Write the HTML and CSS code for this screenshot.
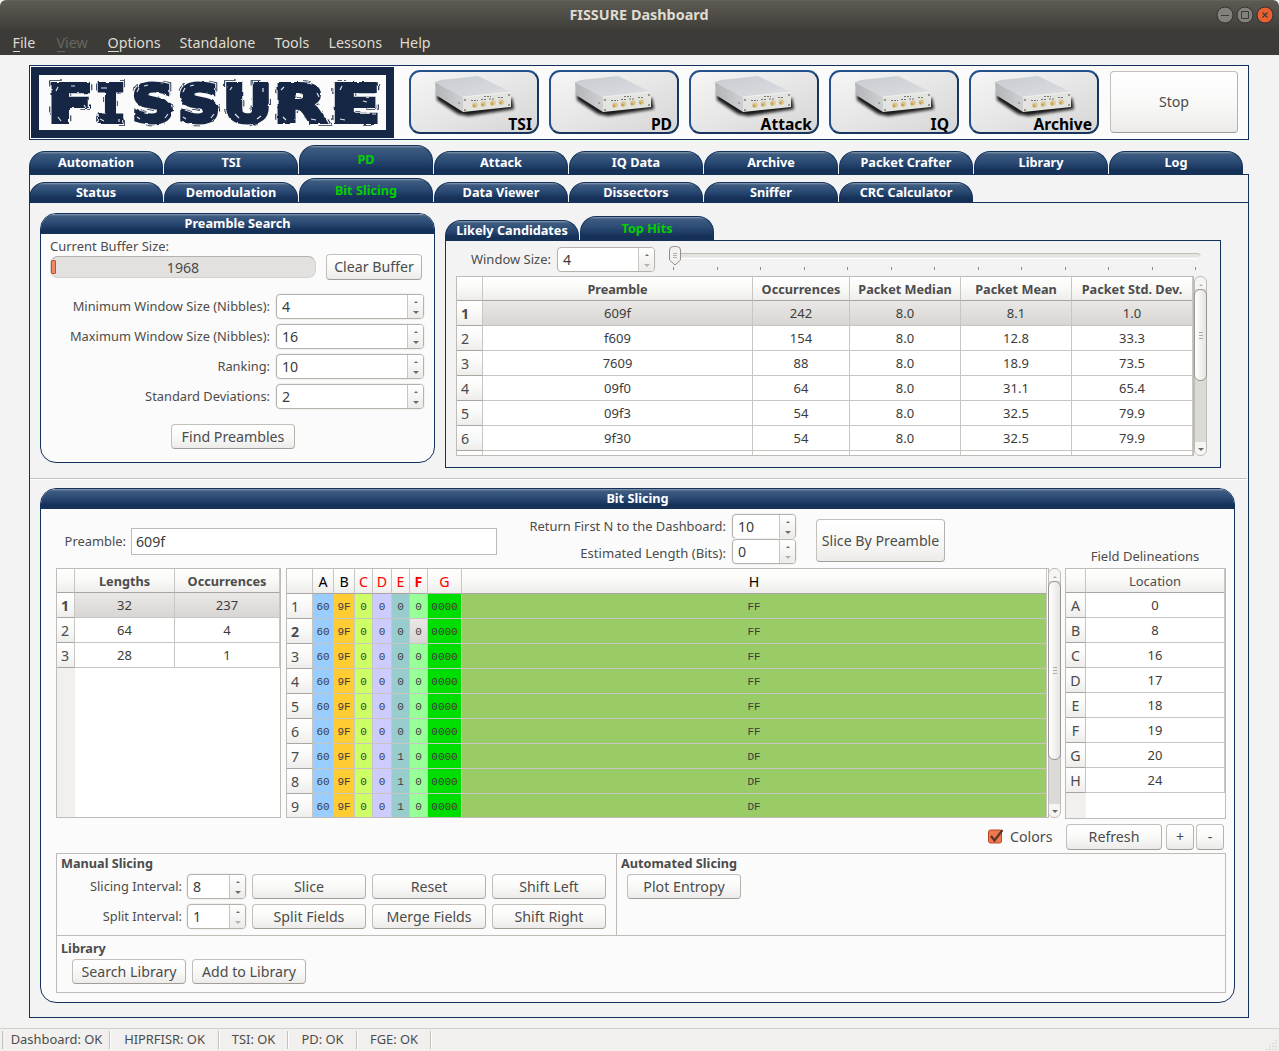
FILE: index.html
```html
<!DOCTYPE html>
<html lang="en">
<head>
<meta charset="utf-8">
<title>FISSURE Dashboard</title>
<link rel="stylesheet" href="styles.css">
</head>
<body>
<svg class="defs" width="0" height="0" aria-hidden="true">
  <defs>
    <linearGradient id="lid" x1="0" y1="0" x2="1" y2="1"><stop offset="0" stop-color="#c9cccf"/><stop offset=".6" stop-color="#d3d6da"/><stop offset="1" stop-color="#dfe0e2"/></linearGradient>
    <linearGradient id="side" x1="0" y1="0" x2="1" y2="0"><stop offset="0" stop-color="#b3b5b8"/><stop offset="1" stop-color="#cfd0d2"/></linearGradient>
    <filter id="soft" x="-20%" y="-30%" width="140%" height="170%"><feGaussianBlur stdDeviation="1.700"/></filter>
    <filter id="rough" x="-5%" y="-10%" width="110%" height="120%"><feTurbulence type="fractalNoise" baseFrequency=".2" numOctaves="1" seed="4" result="n"/><feDisplacementMap in="SourceGraphic" in2="n" scale="3" xChannelSelector="R" yChannelSelector="G"/></filter>
    <symbol id="radio" viewBox="0 0 126 60">
      <path d="M26 18L52 33L101 26L103 37L57 44L47 42L26 28Z" fill="#111" opacity=".95" filter="url(#soft)"/>
      <path d="M24 10L52 25V40L25 23Z" fill="url(#side)"/>
      <path d="M24 10L30 8L67 4L100 20L52 25Z" fill="url(#lid)"/>
      <path d="M52 25L100 20V35L52 40Z" fill="#e3e3df"/>
      <path d="M52 25L100 20" stroke="#eff0f1"/>
      <g fill="#7b6f66"><circle cx="54" cy="28" r=".9"/><circle cx="98" cy="23" r=".9"/><circle cx="54" cy="38" r=".9"/><circle cx="98" cy="33" r=".9"/><circle cx="48" cy="31" r=".8"/></g>
      <path d="M60 28.500h7M70 27.500h6M78 27h6M87 25.500h6M73 24.500h7" stroke="#78746e" stroke-width="1" stroke-dasharray="2 1"/>
      <g fill="#dcc897"><circle cx="64" cy="33" r="2.800"/><circle cx="72.500" cy="32" r="2.800"/><circle cx="82" cy="31" r="2.800"/><circle cx="90.500" cy="30" r="2.800"/></g>
      <g fill="#c9a24c"><circle cx="63" cy="34" r="1.400"/><circle cx="71.500" cy="33" r="1.400"/><circle cx="81" cy="32" r="1.400"/><circle cx="89.500" cy="31" r="1.400"/></g>
    </symbol>
  </defs>
</svg>

<header class="titlebar">
  <span class="title">FISSURE Dashboard</span>
  <div class="winbtns">
    <svg width="18" height="18"><circle cx="9" cy="9" r="8" fill="#83817b" stroke="#33322e"/><path d="M5 9.500h8" stroke="#3c3b37"/></svg>
    <svg width="18" height="18"><circle cx="9" cy="9" r="8" fill="#83817b" stroke="#33322e"/><path d="M5.500 5.500h7v7h-7z" fill="none" stroke="#3c3b37"/></svg>
    <svg width="18" height="18"><circle cx="9" cy="9" r="8" fill="#ea5f31" stroke="#33322e"/><path d="M6.500 6.500l5 5M11.500 6.500l-5 5" stroke="#3c3b37" stroke-width="1.200"/></svg>
  </div>
</header>
<nav class="menubar">
  <span class="m1"><u>F</u>ile</span><span class="m2 off"><u>V</u>iew</span><span class="m3"><u>O</u>ptions</span><span class="m4">Standalone</span><span class="m5">Tools</span><span class="m6">Lessons</span><span class="m7">Help</span>
</nav>

<main>
  <section class="banner">
    <svg class="logo" width="363" height="71" viewBox="0 0 363 71">
      <defs>
        <g id="wordmark">
          <text x="17" y="54.500" textLength="45" lengthAdjust="spacingAndGlyphs">F</text>
          <text class="slab" x="64.500" y="54.500" textLength="30" lengthAdjust="spacingAndGlyphs">I</text>
          <text x="101" y="54.500" textLength="42" lengthAdjust="spacingAndGlyphs">S</text>
          <text x="147" y="54.500" textLength="42" lengthAdjust="spacingAndGlyphs">S</text>
          <text x="192" y="54.500" textLength="49" lengthAdjust="spacingAndGlyphs">U</text>
          <text x="243" y="54.500" textLength="52" lengthAdjust="spacingAndGlyphs">R</text>
          <text x="300" y="54.500" textLength="49" lengthAdjust="spacingAndGlyphs">E</text>
        </g>
      </defs>
      <rect width="363" height="71" fill="#152744"/>
      <rect x="8" y="8" width="347" height="55" fill="#fbfbfb"/>
      <g class="logotext" filter="url(#rough)">
        <use href="#wordmark" class="halo"/>
        <use href="#wordmark" class="gap"/>
        <use href="#wordmark" class="ink"/>
      </g>
      <path class="chips" d="M25 24l2-4M40 19h4M27 50l3 4M53 38l2 3M70 21h6M69 52l4 2M88 52v3M106 25l2-4M113 19l4-1M106 50l3 2M137 47l-3 4M152 25l2-4M159 19l4-1M152 50l3 2M183 47l-3 4M199 23l2-3M204 47l4 4M230 49l-4 3M232 21v4M250 23l3-3M252 50l3 3M286 26l2 4M280 52l5 1M309 23l2-4M309 52l5 1M341 47h4M332 34l4 1"/>
    </svg>
    <div class="devs">
      <button class="dev"><svg width="126" height="60"><use href="#radio"/></svg><b>TSI</b></button>
      <button class="dev"><svg width="126" height="60"><use href="#radio"/></svg><b>PD</b></button>
      <button class="dev"><svg width="126" height="60"><use href="#radio"/></svg><b>Attack</b></button>
      <button class="dev iq"><svg width="126" height="60"><use href="#radio"/></svg><b>IQ</b></button>
      <button class="dev"><svg width="126" height="60"><use href="#radio"/></svg><b>Archive</b></button>
    </div>
    <button class="btn stop">Stop</button>
  </section>

  <nav class="tabs main-tabs">
    <span class="tab">Automation</span><span class="tab">TSI</span><span class="tab on">PD</span><span class="tab">Attack</span><span class="tab">IQ Data</span><span class="tab">Archive</span><span class="tab">Packet Crafter</span><span class="tab">Library</span><span class="tab">Log</span>
  </nav>

  <section class="pane">
    <nav class="tabs sub-tabs">
      <span class="tab">Status</span><span class="tab">Demodulation</span><span class="tab on">Bit Slicing</span><span class="tab">Data Viewer</span><span class="tab">Dissectors</span><span class="tab">Sniffer</span><span class="tab">CRC Calculator</span>
    </nav>

    <div class="upper">
      <section class="group search">
        <h2>Preamble Search</h2>
        <label class="buflabel">Current Buffer Size:</label>
        <div class="bufrow">
          <div class="progress"><i></i><span>1968</span></div>
          <button class="btn clear">Clear Buffer</button>
        </div>
        <div class="fields">
          <label>Minimum Window Size (Nibbles):</label><div class="spin"><span>4</span><i><s class="up"></s><s class="dn"></s></i></div>
          <label>Maximum Window Size (Nibbles):</label><div class="spin"><span>16</span><i><s class="up"></s><s class="dn"></s></i></div>
          <label>Ranking:</label><div class="spin"><span>10</span><i><s class="up"></s><s class="dn"></s></i></div>
          <label>Standard Deviations:</label><div class="spin"><span>2</span><i><s class="up"></s><s class="dn"></s></i></div>
        </div>
        <button class="btn find">Find Preambles</button>
      </section>

      <section class="hits">
        <nav class="tabs hit-tabs"><span class="tab">Likely Candidates</span><span class="tab on">Top Hits</span></nav>
        <div class="hitpane">
          <div class="winrow">
            <label>Window Size:</label>
            <div class="spin"><span>4</span><i><s class="up"></s><s class="dn dim"></s></i></div>
            <svg class="slider" width="534" height="28">
              <rect x="2.500" y="8.500" width="529" height="4" rx="2" fill="#e6e4e1"/>
              <path d="M3 8.500h527q2 0 2 2" fill="none" stroke="#bfbbb5"/>
              <path d="M3 13.500h527" stroke="#fff"/>
              <path d="M5.500 22v3M49.500 22v3M92.500 22v3M136.500 22v3M179.500 22v3M223.500 22v3M266.500 22v3M310.500 22v3M353.500 22v3M397.500 22v3M440.500 22v3M484.500 22v3M527.500 22v3" stroke="#8f8c87"/>
              <path d="M1.500 5q0-3.500 4-3.500h3q4 0 4 3.500v10l-5.500 5-5.500-5z" fill="#f2f1f0" stroke="#928e87"/>
              <path d="M5 8.500h4M5 10.500h4M5 12.500h4" stroke="#b5b1ab"/>
            </svg>
          </div>
          <div class="tablewrap top-table">
            <div class="clip">
            <table>
              <colgroup><col style="width:26px"><col style="width:270px"><col style="width:97px"><col style="width:111px"><col style="width:111px"><col style="width:121px"></colgroup>
              <tr><th></th><th>Preamble</th><th>Occurrences</th><th>Packet Median</th><th>Packet Mean</th><th>Packet Std. Dev.</th></tr>
              <tr class="sel"><th>1</th><td>609f</td><td>242</td><td>8.0</td><td>8.1</td><td>1.0</td></tr>
              <tr><th>2</th><td>f609</td><td>154</td><td>8.0</td><td>12.8</td><td>33.3</td></tr>
              <tr><th>3</th><td>7609</td><td>88</td><td>8.0</td><td>18.9</td><td>73.5</td></tr>
              <tr><th>4</th><td>09f0</td><td>64</td><td>8.0</td><td>31.1</td><td>65.4</td></tr>
              <tr><th>5</th><td>09f3</td><td>54</td><td>8.0</td><td>32.5</td><td>79.9</td></tr>
              <tr><th>6</th><td>9f30</td><td>54</td><td>8.0</td><td>32.5</td><td>79.9</td></tr>
              <tr><th></th><td></td><td></td><td></td><td></td><td></td></tr>
            </table>
            </div>
            <div class="scroll"><s class="up dim"></s><div class="thumb short"><i></i></div><s class="dn"></s></div>
          </div>
        </div>
      </section>
    </div>

    <hr>

    <section class="group slicing">
      <h2>Bit Slicing</h2>
      <div class="query">
        <label class="plabel">Preamble:</label>
        <div class="line">609f</div>
        <div class="opts">
          <label>Return First N to the Dashboard:</label><div class="spin"><span>10</span><i><s class="up"></s><s class="dn"></s></i></div>
          <label>Estimated Length (Bits):</label><div class="spin"><span>0</span><i><s class="up"></s><s class="dn dim"></s></i></div>
        </div>
        <button class="btn slicebtn">Slice By Preamble</button>
        <label class="fdlabel">Field Delineations</label>
      </div>

      <div class="tables">
        <div class="clip lengths">
          <table>
            <colgroup><col style="width:18px"><col style="width:100px"><col style="width:105px"></colgroup>
            <tr><th></th><th>Lengths</th><th>Occurrences</th></tr>
            <tr class="sel"><th>1</th><td>32</td><td>237</td></tr>
            <tr><th>2</th><td>64</td><td>4</td></tr>
            <tr><th>3</th><td>28</td><td>1</td></tr>
          </table>
        </div>
        <div class="tablewrap bits-wrap">
          <div class="clip bits">
          <table>
            <colgroup><col style="width:26px"><col style="width:21px"><col style="width:21px"><col style="width:18px"><col style="width:19px"><col style="width:18px"><col style="width:18px"><col style="width:34px"><col style="width:585px"></colgroup>
            <tr><th></th><th>A</th><th>B</th><th class="r">C</th><th class="r">D</th><th class="r">E</th><th class="r b">F</th><th class="r">G</th><th>H</th></tr>
            <tr><th>1</th><td>60</td><td>9F</td><td>0</td><td>0</td><td>0</td><td>0</td><td>0000</td><td>FF</td></tr>
            <tr class="cur"><th>2</th><td>60</td><td>9F</td><td>0</td><td>0</td><td>0</td><td class="cell">0</td><td>0000</td><td>FF</td></tr>
            <tr><th>3</th><td>60</td><td>9F</td><td>0</td><td>0</td><td>0</td><td>0</td><td>0000</td><td>FF</td></tr>
            <tr><th>4</th><td>60</td><td>9F</td><td>0</td><td>0</td><td>0</td><td>0</td><td>0000</td><td>FF</td></tr>
            <tr><th>5</th><td>60</td><td>9F</td><td>0</td><td>0</td><td>0</td><td>0</td><td>0000</td><td>FF</td></tr>
            <tr><th>6</th><td>60</td><td>9F</td><td>0</td><td>0</td><td>0</td><td>0</td><td>0000</td><td>FF</td></tr>
            <tr><th>7</th><td>60</td><td>9F</td><td>0</td><td>0</td><td>1</td><td>0</td><td>0000</td><td>DF</td></tr>
            <tr><th>8</th><td>60</td><td>9F</td><td>0</td><td>0</td><td>1</td><td>0</td><td>0000</td><td>DF</td></tr>
            <tr><th>9</th><td>60</td><td>9F</td><td>0</td><td>0</td><td>1</td><td>0</td><td>0000</td><td>DF</td></tr>
          </table>
          </div>
          <div class="scroll"><s class="up dim"></s><div class="thumb long"><i></i></div><s class="dn"></s></div>
        </div>
        <div class="clip fieldtable">
          <table>
            <colgroup><col style="width:20px"><col style="width:139px"></colgroup>
            <tr><th></th><th>Location</th></tr>
            <tr><th>A</th><td>0</td></tr>
            <tr><th>B</th><td>8</td></tr>
            <tr><th>C</th><td>16</td></tr>
            <tr><th>D</th><td>17</td></tr>
            <tr><th>E</th><td>18</td></tr>
            <tr><th>F</th><td>19</td></tr>
            <tr><th>G</th><td>20</td></tr>
            <tr><th>H</th><td>24</td></tr>
          </table>
        </div>
      </div>

      <div class="actions">
        <svg width="17" height="17"><rect x="1.500" y="2" width="13" height="13" rx="2" fill="#f0784e" stroke="#b5492a"/><path d="M4 8l3.500 4.500L15.500 2" fill="none" stroke="#5a3427" stroke-width="2.200"/></svg>
        <span class="colors">Colors</span>
        <button class="btn refresh">Refresh</button>
        <button class="btn sq">+</button>
        <button class="btn sq">-</button>
      </div>

      <div class="frame">
        <div class="manual">
          <h3>Manual Slicing</h3>
          <div class="mgrid">
            <label>Slicing Interval:</label><div class="spin"><span>8</span><i><s class="up"></s><s class="dn"></s></i></div><button class="btn">Slice</button><button class="btn">Reset</button><button class="btn">Shift Left</button>
            <label>Split Interval:</label><div class="spin"><span>1</span><i><s class="up"></s><s class="dn dim"></s></i></div><button class="btn">Split Fields</button><button class="btn">Merge Fields</button><button class="btn">Shift Right</button>
          </div>
        </div>
        <div class="auto">
          <h3>Automated Slicing</h3>
          <button class="btn">Plot Entropy</button>
        </div>
        <div class="lib">
          <h3>Library</h3>
          <div class="librow"><button class="btn">Search Library</button><button class="btn">Add to Library</button></div>
        </div>
      </div>
    </section>
  </section>
</main>

<footer class="status">
  <span class="s1">Dashboard: OK</span><span class="s2">HIPRFISR: OK</span><span class="s3">TSI: OK</span><span class="s4">PD: OK</span><span class="s5">FGE: OK</span>
  <svg class="grip" width="12" height="12"><path d="M9 1.500h2M6 4.500h2M9 4.500h2M3 7.500h2M6 7.500h2M9 7.500h2M0 10.500h2M3 10.500h2M6 10.500h2M9 10.500h2" stroke="#dedbd7" stroke-width="1.500"/></svg>
</footer>
</body>
</html>
```
FILE: styles.css
```css
* { box-sizing: border-box; }
body {
  margin: 0; width: 1279px; height: 1051px; overflow: hidden;
  display: flex; flex-direction: column;
  background: #f3f3f3; color: #4c4c4c;
  font: 13px/16px "Noto Sans", sans-serif;
}
.defs { position: absolute; }
h2, h3 { margin: 0; font-size: 12.7px; }
button { font: inherit; color: inherit; padding: 0; }

.titlebar {
  height: 30px; flex: none; display: grid; grid-template-columns: 1fr auto 1fr; align-items: center;
  background: linear-gradient(#6b685f 0, #5c5a52 1px, #3f3e39 30px);
  border-radius: 6px 6px 0 0; color: #dfdbd2; font-weight: bold; font-size: 14.400px;
}
.title { grid-column: 2; margin-right: 1px; }
.winbtns { display: flex; gap: 2px; justify-self: end; margin-right: 5px; }
.menubar {
  height: 25px; flex: none; display: flex; background: #3c3b37; color: #dfdbd2;
  font-size: 14.300px; line-height: 25px; padding-left: 12.500px; white-space: nowrap;
}
.menubar u { text-decoration: none; display: inline-block; height: 22px; border-bottom: 1px solid; }
.menubar span { flex: none; }
.menubar .off { color: #6a675f; }
.m1 { width: 44px; } .m2 { width: 51px; } .m3 { width: 72px; } .m4 { width: 95px; }
.m5 { width: 54px; } .m6 { width: 71px; }

main { width: 1220px; margin-left: 29px; height: 973px; padding-top: 10px; flex: none; }
.banner {
  height: 75px; border: 1px solid #13315c; background: #fbfbfb;
  display: flex; padding: 1px 0 0 1px;
}
.logo { flex: none; }
.logotext { font: bold 51px "DejaVu Sans", sans-serif; }
.slab { font-family: "DejaVu Sans Mono", monospace; }
.halo { fill: none; stroke: #152744; stroke-width: 7.500px; stroke-dasharray: 6 20; }
.gap { fill: none; stroke: #fbfbfb; stroke-width: 5.800px; }
.ink { fill: #152744; stroke: #152744; stroke-width: 4px; }
.chips { stroke: #dfe2e8; stroke-width: 1.200px; fill: none; }
.devs { display: flex; gap: 10px; margin: 3px 0 0 15px; }
.dev {
  width: 130px; height: 64px; border: 2px solid; border-color: #24508c #17355e #17355e #24508c;
  border-radius: 11px; background: linear-gradient(155deg, #f6f6f6, #d6d6d6);
  color: #000; position: relative; overflow: hidden;
}
.dev svg { display: block; }
.dev b { position: absolute; right: 5px; bottom: -2px; font-size: 15.600px; line-height: 20px; }
.dev.iq b { right: 8px; }

.btn {
  border: 1px solid #c3bfba; border-bottom-color: #a19d97; border-right-color: #b5b1ab; border-radius: 4px;
  background: linear-gradient(#fff, #f9f9f8 50%, #ecebe9);
  font-size: 14.200px; line-height: 18px; text-align: center; white-space: nowrap; height: 26px; flex: none;
}
.stop { width: 128px; height: 62px; margin: 4px 0 0 11px; }

.tabs { display: flex; gap: 1px; align-items: flex-end; }
.tab {
  width: 134px; border: 1px solid #13315c; border-bottom: 0; border-radius: 16px 16px 0 0;
  background: linear-gradient(#8a9cb1 0, #3f5c80 2px, #2a4a74 45%, #163158 80%);
  color: #fff; font-weight: bold; font-size: 12.700px; text-align: center; white-space: nowrap;
}
.on { color: #00d000; }
.main-tabs { height: 35px; margin-bottom: -1px; position: relative; }
.main-tabs .tab { height: 24px; line-height: 21px; }
.main-tabs .on { height: 30px; line-height: 27px; }
.pane { height: 844px; border: 1px solid #13315c; }
.sub-tabs { height: 28px; border-bottom: 1px solid #13315c; margin-left: -1px; }
.sub-tabs .tab { height: 20px; line-height: 19px; }
.sub-tabs .on { height: 24px; line-height: 23px; }

.upper { height: 275px; display: flex; padding: 10px 0 0 10px; }
.group { border: 1px solid #13315c; border-radius: 16px; background: #fbfbfb; overflow: hidden; }
.group h2 {
  height: 20px; line-height: 19px; color: #fff; text-align: center;
  background: linear-gradient(#8a9cb1 0, #3f5c80 2px, #2a4a74 45%, #163158 80%);
}
.search { width: 395px; height: 250px; flex: none; display: flex; flex-direction: column; }
.buflabel { margin: 4px 0 0 9px; height: 16px; }
.bufrow { display: flex; margin-left: 9px; }
.progress {
  width: 266px; height: 22px; margin-top: 2px; border: 1px solid #d4d1cd; border-top-color: #b5b1ab;
  border-radius: 8px; background: #e3e1df; display: flex; align-items: center;
}
.progress i { width: 5px; height: 14px; background: #f08a63; border: 1px solid #c0522a; border-radius: 1px; }
.progress span { flex: 1; text-align: center; font-size: 14.200px; padding: 1px 5px 0 0; }
.clear { width: 96px; margin-left: 10px; }
.fields {
  display: grid; grid-template-columns: 229px 148px; column-gap: 6px; grid-auto-rows: 26px; row-gap: 4px;
  margin-top: 14px; text-align: right; line-height: 24px; white-space: nowrap; font-size: 12.850px;
}
.find { width: 124px; height: 25px; margin: 14px 0 0 130px; }

.spin {
  height: 25px; border: 1px solid #b5b1ab; border-radius: 4px; background: #fff; display: flex;
  box-shadow: 0 0 0 1px #f1f0ee; flex: none; text-align: left;
}
.spin span { flex: 1; padding-left: 5px; font-size: 14.200px; line-height: 24px; color: #3c3c3c; }
.spin i {
  width: 16px; border-left: 1px solid #c9c6c2; border-radius: 0 3px 3px 0;
  background: linear-gradient(#fff, #ecebe9);
  display: flex; flex-direction: column; align-items: center; justify-content: space-between; padding: 6px 0 4px;
}
.up { width: 0; height: 0; border: 2px solid transparent; border-top: 0; border-bottom: 2px solid #6e6b66; }
.dn { width: 0; height: 0; border: 3px solid transparent; border-bottom: 0; border-top: 3px solid #6e6b66; }
.up.dim { border-bottom-color: #b5b1ab; }
.dn.dim { border-top-color: #b5b1ab; }

.hits { margin: 3px 0 0 10px; width: 776px; }
.hit-tabs { height: 25px; margin-bottom: -1px; position: relative; }
.hit-tabs .tab { height: 21px; line-height: 19px; }
.hit-tabs .on { height: 25px; line-height: 23px; }
.hitpane { height: 228px; border: 1px solid #13315c; padding-left: 10px; }
.winrow { display: flex; height: 35px; padding-top: 6px; }
.winrow label { width: 101px; padding: 4px 6px 0 0; text-align: right; line-height: 17px; }
.winrow .spin { width: 98px; height: 25px; }
.slider { margin: -2px 0 0 13px; flex: none; }

.tablewrap { display: flex; }
.clip { border: 1px solid #bfbcb8; background: #fff; overflow: hidden; flex: none; }
.top-table .clip { width: 738px; height: 180px; }
table { border-collapse: separate; border-spacing: 0; table-layout: fixed; width: 0; }
th, td { padding: 0; height: 25px; overflow: hidden; white-space: nowrap; text-align: center; line-height: 24px; border: 0 solid #c8c6c3; border-width: 0 1px 1px 0; }
td { color: #3c3c3c; }
th { font-size: 12.700px; background: linear-gradient(#fff, #f9f9f8 50%, #eeedeb); border-bottom-color: #a9a6a1; }
tr:first-child th { height: 24px; line-height: 22px; padding-top: 1px; }
tr + tr th:first-child { font-size: 14.200px; font-weight: normal; line-height: 23px; text-align: left; padding: 1px 0 0 4px; }
tr.sel th:first-child, tr.cur th:first-child { font-weight: bold; }
.sel td { background: linear-gradient(#e9e8e6, #d8d6d3); }

.scroll {
  width: 13px; border: 1px solid #bfbcb8; border-radius: 6px;
  display: flex; flex-direction: column; align-items: center; flex: none;
  background: linear-gradient(#f6f5f4 12px, #dcdad7 12px, #dcdad7 calc(100% - 13px), #f6f5f4 calc(100% - 13px));
}
.scroll > .up { margin-top: 7px; flex: none; }
.scroll > .dn { margin: auto 0 4px; flex: none; }
.thumb {
  width: 13px; margin-top: 3px; border: 1px solid #99958f; border-radius: 6px; flex: none;
  background: linear-gradient(90deg, #fff, #e6e4e2); display: grid; place-items: center;
}
.thumb i { width: 4px; height: 7px; background: repeating-linear-gradient(#aaa 0 1px, transparent 1px 3px); }
.short { height: 92px; } .long { height: 179px; }
.top-table .scroll { height: 180px; }

hr { margin: 0; width: 1217px; height: 2px; border: 0; border-top: 1px solid #c4c2bf; background: #fff; }

.slicing { width: 1195px; height: 515px; margin: 8px 0 0 10px; }
.query { height: 59px; display: flex; white-space: nowrap; }
.plabel { width: 85px; text-align: right; margin-top: 24px; font-size: 12.900px; }
.line {
  width: 366px; height: 27px; margin: 19px 0 0 5px; border: 1px solid #bfbcb8; background: #fff;
  font-size: 14.200px; line-height: 25px; padding-left: 4px; color: #3c3c3c;
}
.opts {
  display: grid; grid-template-columns: 230px 64px; column-gap: 5px; grid-auto-rows: 25px;
  text-align: right; margin-top: 5px; line-height: 24px; font-size: 12.900px;
}
.opts label { margin-right: 1px; }
.opts label:nth-of-type(2) { line-height: 28px; font-size: 13.100px; }
.slicebtn { width: 129px; height: 43px; margin: 10px 0 0 20px; }
.fdlabel { margin: 39px 0 0 120px; width: 160px; text-align: center; }
.tables { display: flex; margin-left: 15px; height: 251px; align-items: flex-start; }
.lengths { width: 225px; height: 250px; background: linear-gradient(90deg, #f1f0ee 18px, #fff 18px); }
.bits-wrap { margin-left: 5px; }
.bits { width: 763px; height: 250px; }
.bits + .scroll { height: 250px; margin-left: -1px; }
.bits tr:first-child th { height: 25px; line-height: 23px; font-size: 14.200px; font-weight: normal; color: #000; }
.bits tr th.r { color: #f00; }
.bits tr:first-child th.b { font-weight: bold; }
.bits td { font: 11px/22px "Liberation Mono", monospace; padding-top: 2px; }
.bits td:nth-child(2) { background: #99ccff; }
.bits td:nth-child(3) { background: #ffcc33; }
.bits td:nth-child(4) { background: #ccff66; }
.bits td:nth-child(5) { background: #ccccff; }
.bits td:nth-child(6) { background: #99cccc; }
.bits td:nth-child(7) { background: #99ff99; }
.bits td:nth-child(8) { background: #00dd00; }
.bits td:nth-child(9) { background: #99cc66; }
.bits td.cell { background: linear-gradient(#e9e8e6, #d8d6d3); }
.fieldtable { width: 161px; height: 251px; margin-left: 4px; background: linear-gradient(90deg, #f1f0ee 20px, #fff 20px); }
.fieldtable tr:first-child th { font-size: 13px; font-weight: normal; }
.fieldtable tr + tr th:first-child { padding: 1px 0 0; text-align: center; }

.actions { height: 34px; display: flex; padding: 5px 10px 0 946px; }
.actions svg { margin-top: 4px; flex: none; }
.colors { font-size: 14.200px; line-height: 26px; margin-left: 6px; width: 56px; flex: none; }
.refresh { width: 96px; margin-right: 4px; }
.sq { width: 28px; margin-right: 2px; }

.frame {
  width: 1170px; height: 140px; margin-left: 15px; border: 1px solid #bfbcb8;
  display: grid; grid-template: 82px 56px / 560px 608px;
}
.frame h3 { padding-left: 4px; line-height: 19px; height: 20px; }
.manual { border: solid #bfbcb8; border-width: 0 1px 1px 0; }
.auto { border-bottom: 1px solid #bfbcb8; }
.lib { grid-column: 1 / 3; }
.frame .lib h3 { line-height: 25px; height: 23px; }
.mgrid {
  display: grid; grid-template-columns: 125px 58px 114px 114px 114px; column-gap: 6px; row-gap: 4px; grid-auto-rows: 26px;
  text-align: right; line-height: 24px; white-space: nowrap; font-size: 12.800px;
}
.mgrid .spin { margin-left: -1px; }
.frame .btn { padding-top: 1px; height: 25px; }
.auto .btn { width: 114px; margin-left: 10px; display: block; }
.librow { display: flex; gap: 6px; margin-left: 15px; }
.librow .btn { width: 114px; }

.status {
  height: 23px; flex: none; background: #f1f0ee; border-top: 1px solid #d4d1cd; display: flex;
  font-size: 12.900px; white-space: nowrap; padding-left: 2px;
}
.status span { border-right: 1px solid #c4c1bd; text-align: center; height: 18px; margin-top: 2px; padding-left: 1px; line-height: 17px; flex: none; box-shadow: 1px 0 #fff; }
.s1 { width: 108px; border-left: 1px solid #c4c1bd; } .s2 { width: 109px; } .s3 { width: 69px; } .s4 { width: 69px; } .s5 { width: 74px; }
.grip { margin: 10px 1px 0 auto; }
```
